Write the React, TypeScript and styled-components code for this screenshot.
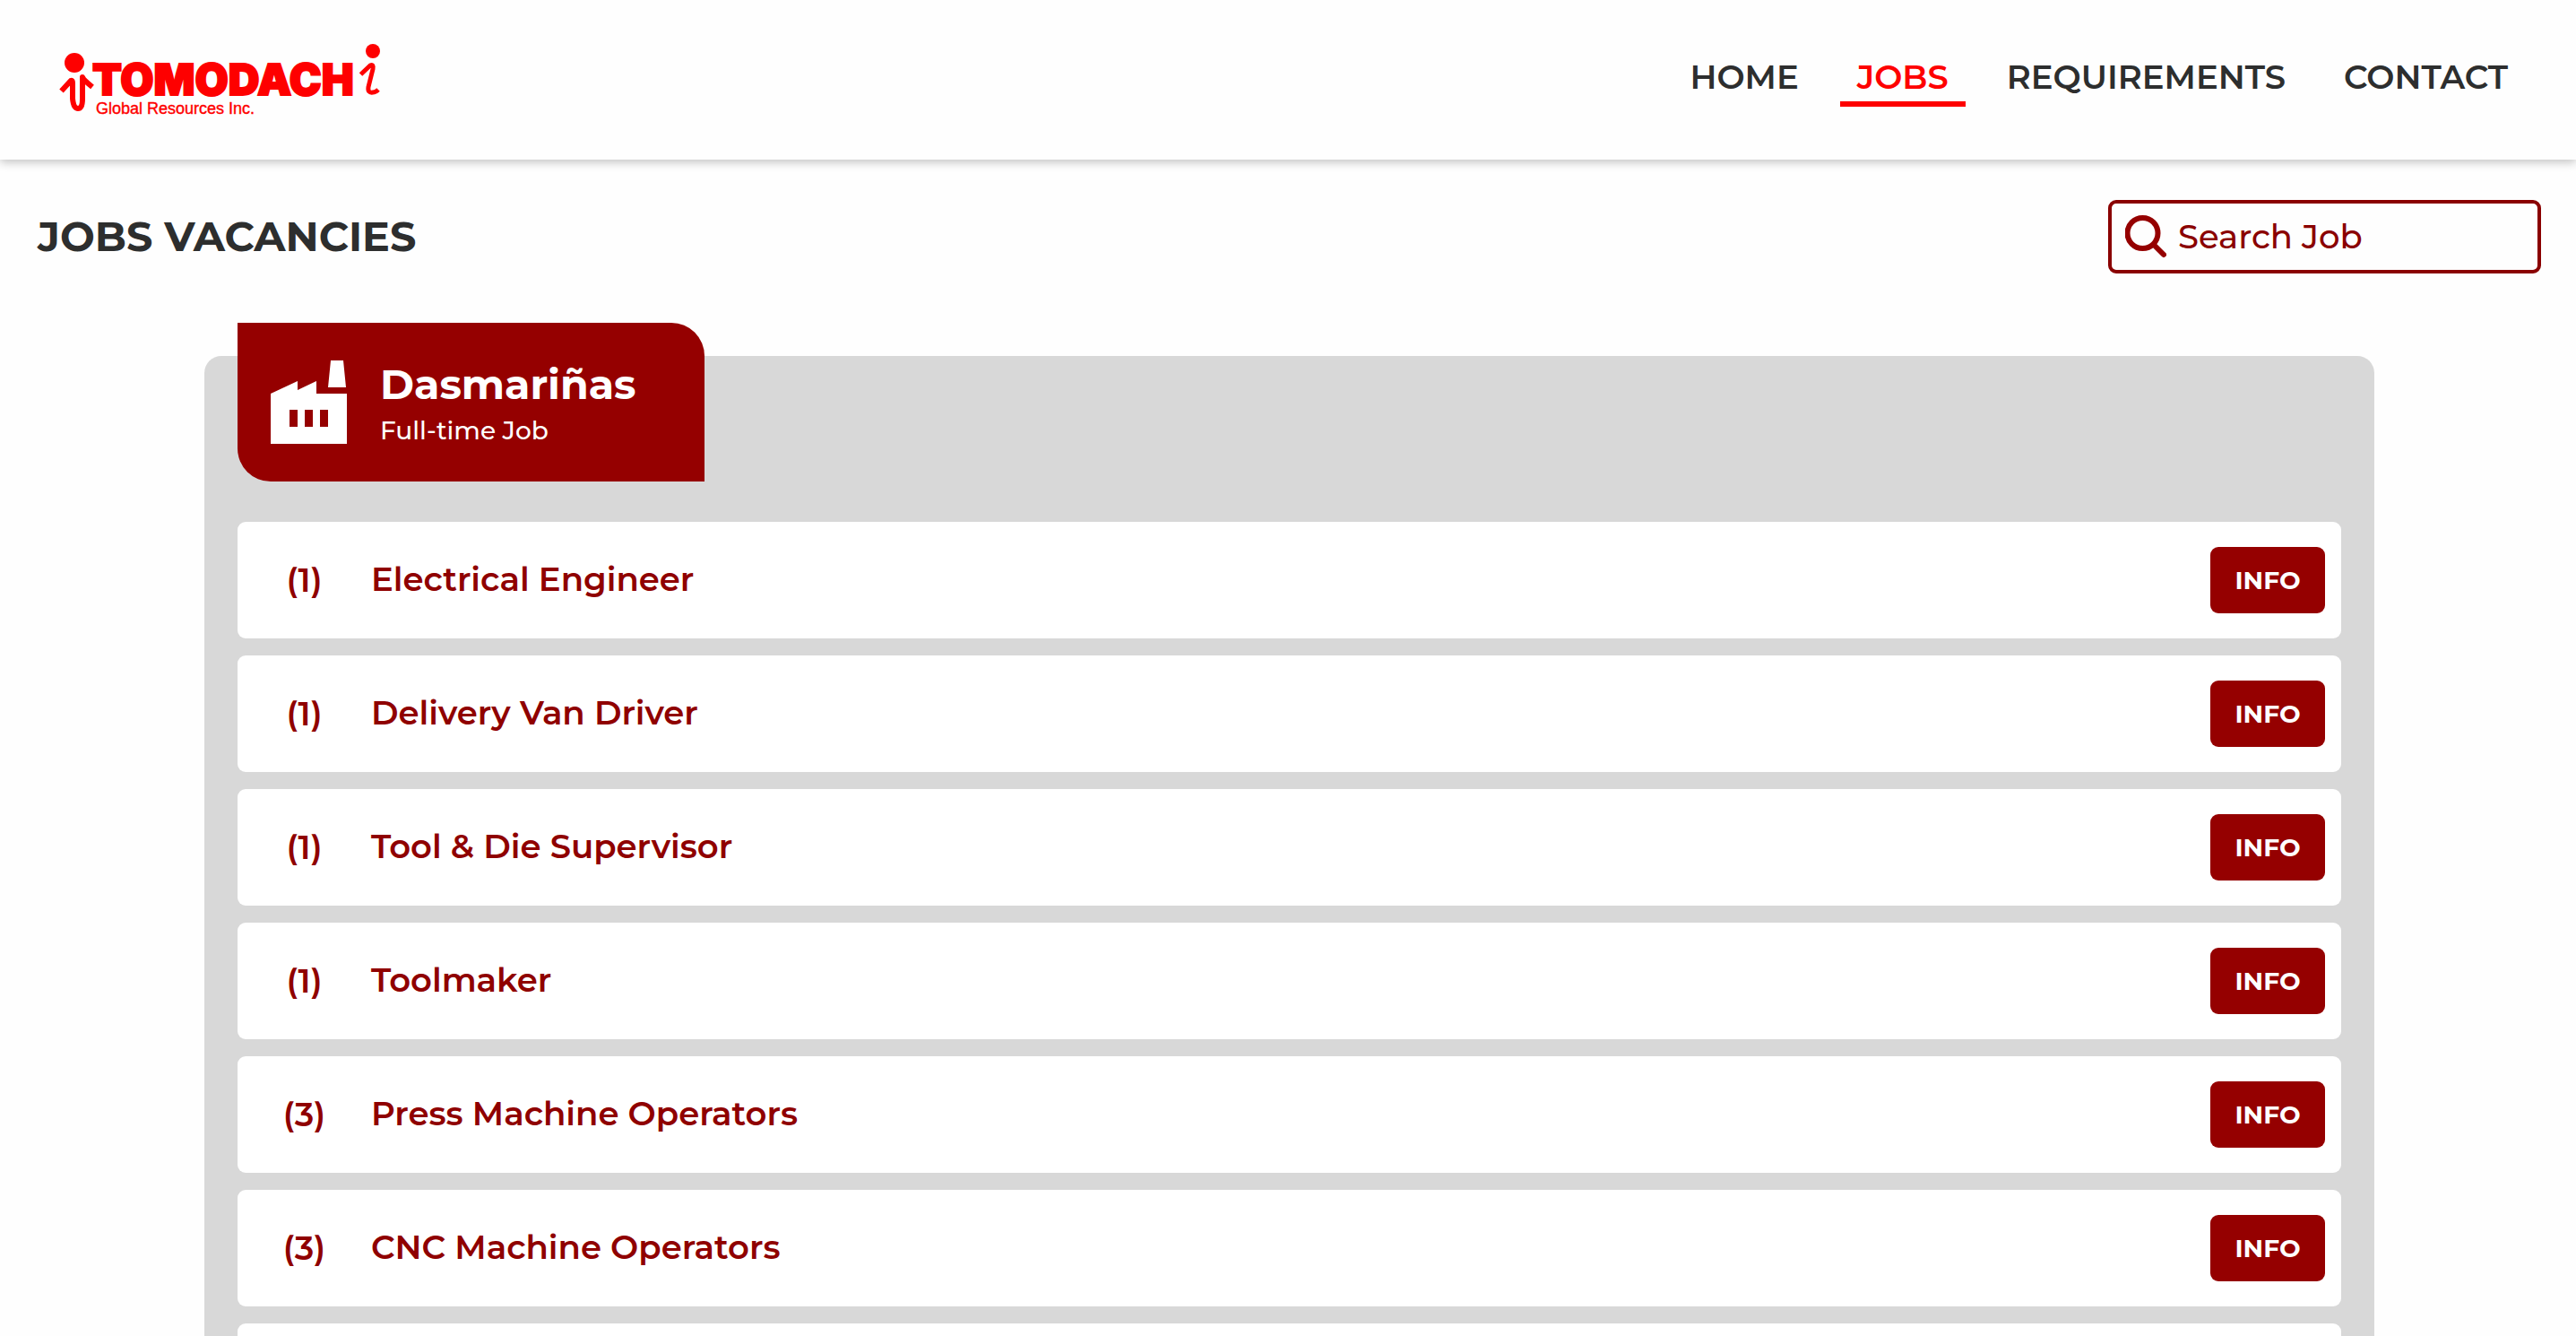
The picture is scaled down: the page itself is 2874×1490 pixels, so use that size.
import React, { useState } from "react";
import styled, { createGlobalStyle } from "styled-components";

const maroon = "#950000";
const ink = "#2d2e2e";
const sans = `Montserrat, Inter, "Open Sans", sans-serif`;

const GlobalStyle = createGlobalStyle`
  *, *::before, *::after { box-sizing: border-box; }
  body { margin: 0; background: #fefefe; font-family: ${sans}; }
  h1, h2, p, ul { margin: 0; padding: 0; }
`;

const Page = styled.div`
  height: 100vh;
  overflow: hidden;
`;

const Header = styled.header`
  display: flex;
  align-items: center;
  justify-content: space-between;
  height: 178px;
  padding: 0 57px 0 64px;
  background: #fefefe;
  box-shadow: 0 3px 10px rgba(0, 0, 0, 0.24);
`;

const HomeLink = styled.a`
  display: block;
  line-height: 0;
`;

const Nav = styled.nav`
  display: flex;
  gap: 27px;
`;

const NavLink = styled.a<{ $active?: boolean }>`
  padding: 4px 19px;
  border-bottom: 6px solid ${(p) => (p.$active ? "#fe0000" : "transparent")};
  color: ${(p) => (p.$active ? "#fe0000" : ink)};
  font-size: 37px;
  font-weight: 600;
  line-height: 46px;
  text-decoration: none;
`;

const TitleBar = styled.div`
  display: flex;
  align-items: center;
  justify-content: space-between;
  padding: 45px 39px 55px 42px;
`;

const Title = styled.h1`
  color: ${ink};
  font-size: 46px;
  font-weight: 700;
  line-height: 56px;
`;

const SearchBox = styled.label`
  display: flex;
  align-items: center;
  gap: 13px;
  width: 483px;
  height: 82px;
  padding: 0 15px;
  border: 4px solid #8a0000;
  border-radius: 9px;
`;

const SearchInput = styled.input`
  flex: 1;
  min-width: 0;
  padding: 0;
  border: 0;
  outline: 0;
  background: transparent;
  color: #8a0000;
  font-family: inherit;
  font-size: 37px;
  font-weight: 500;
  line-height: 46px;
  &::placeholder { color: #8a0000; opacity: 1; }
`;

const Panel = styled.section`
  margin: 37px 225px 0 228px;
  padding: 0 37px 37px;
  border-radius: 19px;
  background: #d8d8d8;
`;

const BranchTab = styled.header`
  display: inline-flex;
  align-items: center;
  gap: 37px;
  height: 177px;
  margin-top: -37px;
  padding: 0 76px 0 37px;
  border-radius: 0 37px 0 37px;
  background: ${maroon};
  color: #fff;
`;

const BranchText = styled.div`
  padding-top: 6px;
`;

const BranchName = styled.h2`
  font-size: 46px;
  font-weight: 700;
  line-height: 56px;
`;

const BranchType = styled.p`
  font-size: 28px;
  font-weight: 500;
  line-height: 46px;
`;

const JobList = styled.ul`
  display: grid;
  gap: 19px;
  margin-top: 45px;
  list-style: none;
`;

const JobRow = styled.li`
  display: flex;
  align-items: center;
  height: 130px;
  padding-right: 18px;
  border-radius: 9px;
  background: #fff;
  color: #8f0000;
  font-size: 37px;
  font-weight: 600;
  line-height: 46px;
`;

const Count = styled.span`
  width: 149px;
  text-align: center;
`;

const JobName = styled.span`
  flex: 1;
  padding-bottom: 2px;
`;

const InfoButton = styled.button`
  width: 128px;
  height: 74px;
  padding: 0;
  border: 0;
  border-radius: 9px;
  background: ${maroon};
  color: #fff;
  font-family: inherit;
  font-size: 28px;
  font-weight: 700;
  cursor: pointer;
`;

const Logo = () => (
  <svg width="364" height="86" viewBox="64 46 364 86" role="img" aria-label="Tomodachi Global Resources Inc.">
    <g fill="none" stroke="#fe0000" strokeLinejoin="round">
      <path d="M68.500 101.500 L79 90 Q81 89 81 93 V110 Q82 121 87 121 Q92 121 92 110 V86 Q93 89 103 97" strokeWidth="6" />
      <path d="M402.500 83 L413 73 Q417 71 416 77 L411 97 Q410 104 416 103 Q419 103 422 100" strokeWidth="5" />
    </g>
    <g fill="#fe0000">
      <circle cx="83" cy="70" r="11" />
      <circle cx="416" cy="57" r="8" />
      <text x="103" y="106" fontFamily="Inter, sans-serif" fontWeight="900" fontSize="48" stroke="#fe0000" strokeWidth="2">TOMODACH</text>
      <text x="107" y="127" fontFamily="'Liberation Sans', sans-serif" fontSize="18" stroke="#fe0000" strokeWidth="0.4">Global Resources Inc.</text>
    </g>
  </svg>
);

const SearchIcon = () => (
  <svg width="46" height="48" viewBox="0 0 46 48" fill="none" stroke="#950000" strokeLinecap="round" aria-hidden="true">
    <circle cx="19.5" cy="20" r="17" strokeWidth="6" />
    <path d="M32 33 L43 44" strokeWidth="6" />
  </svg>
);

const FactoryIcon = () => (
  <svg width="85" height="94" viewBox="0 0 85 94" aria-hidden="true">
    <path
      fill="#fff"
      fillRule="evenodd"
      d="M67 0H81L84 30H64ZM0 37L30 23V33L51 23V37H85V93H0ZM21 55V74H30V55ZM38 55V74H47V55ZM55 55V74H64V55Z"
    />
  </svg>
);

const links = ["Home", "Jobs", "Requirements", "Contact"];

const jobs = [
  { count: 1, name: "Electrical Engineer" },
  { count: 1, name: "Delivery Van Driver" },
  { count: 1, name: "Tool & Die Supervisor" },
  { count: 1, name: "Toolmaker" },
  { count: 3, name: "Press Machine Operators" },
  { count: 3, name: "CNC Machine Operators" },
];

export default function App() {
  const [query, setQuery] = useState("");
  const shown = jobs.filter((job) => job.name.toLowerCase().includes(query.toLowerCase()));

  return (
    <Page>
      <GlobalStyle />
      <Header>
        <HomeLink href="#home"><Logo /></HomeLink>
        <Nav>
          {links.map((link) => (
            <NavLink key={link} href={`#${link.toLowerCase()}`} $active={link === "Jobs"}>
              {link.toUpperCase()}
            </NavLink>
          ))}
        </Nav>
      </Header>
      <main>
        <TitleBar>
          <Title>JOBS VACANCIES</Title>
          <SearchBox>
            <SearchIcon />
            <SearchInput
              type="text"
              aria-label="Search Job"
              placeholder="Search Job"
              value={query}
              onChange={(e) => setQuery(e.target.value)}
            />
          </SearchBox>
        </TitleBar>
        <Panel>
          <BranchTab>
            <FactoryIcon />
            <BranchText>
              <BranchName>Dasmariñas</BranchName>
              <BranchType>Full-time Job</BranchType>
            </BranchText>
          </BranchTab>
          <JobList>
            {shown.map((job) => (
              <JobRow key={job.name}>
                <Count>({job.count})</Count>
                <JobName>{job.name}</JobName>
                <InfoButton type="button">INFO</InfoButton>
              </JobRow>
            ))}
            <JobRow aria-hidden="true" />
          </JobList>
        </Panel>
      </main>
    </Page>
  );
}
